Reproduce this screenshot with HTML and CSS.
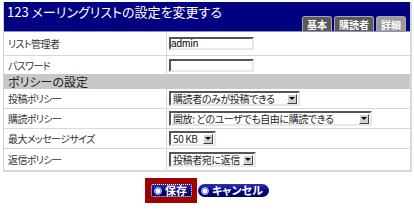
FILE: index.html
```html
<!DOCTYPE html>
<html lang="ja">
<head>
<meta charset="utf-8">
<title>メーリングリストの設定</title>
<link rel="stylesheet" href="styles.css">
</head>
<body>
<div class="panel">
  <div class="header">
    <div class="title">123 メーリングリストの設定を変更する</div>
    <div class="tabs">
      <span class="tab">基本</span>
      <span class="tab">購読者</span>
      <span class="tab active">詳細</span>
    </div>
  </div>
  <div class="row r1">
    <div class="label">リスト管理者</div>
    <div class="value"><span class="input">admin</span></div>
  </div>
  <div class="row r2">
    <div class="label">パスワード</div>
    <div class="value"><span class="input"></span></div>
  </div>
  <div class="section">ポリシーの設定</div>
  <div class="row">
    <div class="label">投稿ポリシー</div>
    <div class="value"><span class="select w1"><span class="val">購読者のみが投稿できる</span><span class="arrow"></span></span></div>
  </div>
  <div class="row">
    <div class="label">購読ポリシー</div>
    <div class="value"><span class="select w2"><span class="val">開放: どのユーザでも自由に購読できる</span><span class="arrow"></span></span></div>
  </div>
  <div class="row">
    <div class="label">最大メッセージサイズ</div>
    <div class="value"><span class="select w3"><span class="val">50 KB</span><span class="arrow"></span></span></div>
  </div>
  <div class="row last">
    <div class="label">返信ポリシー</div>
    <div class="value"><span class="select w4"><span class="val">投稿者宛に返信</span><span class="arrow"></span></span></div>
  </div>
</div>
<div class="buttons">
  <span class="focusbox"><span class="btn focused"><span class="dot"></span>保存</span></span>
  <span class="btn"><span class="dot"></span>キャンセル</span>
</div>
</body>
</html>
```
FILE: styles.css
```css
* { box-sizing: border-box; }
body {
  margin: 0;
  background: #fff;
  font-family: "Noto Sans CJK JP", "Liberation Sans", sans-serif;
  font-size: 10px;
  color: #333;
  font-feature-settings: "palt";
}
.panel {
  margin: 2px 3px 0 3px;
  width: 409px;
  border: 1px solid #d0d0d0;
  border-top: none;
  border-right: 2px solid #d8d8d8;
  border-bottom: 2px solid #d8d8d8;
}
.header {
  background: #000080;
  height: 30px;
  display: flex;
  justify-content: space-between;
  border-bottom: 1px solid #9090c0;
}
.title {
  color: #fff;
  font-size: 13px;
  line-height: 13px;
  padding: 3px 0 0 3px;
}
.tabs {
  display: flex;
  align-items: flex-end;
  gap: 2px;
  padding-right: 4px;
}
.tab {
  background: #5a5a5a;
  color: #fff;
  font-size: 10px;
  font-weight: bold;
  line-height: 13px;
  height: 15px;
  padding: 1px 4px 0;
  border: 1px solid #a8a8a8;
  border-bottom: none;
  border-radius: 3px 3px 0 0;
}
.tab.active { background: #9a9a9a; }
.row {
  display: flex;
  height: 20px;
  border-bottom: 1px solid #d8d8d8;
}
.row.r1 { height: 24px; }
.row.r2 { height: 18px; border-bottom: none; }
.row.last { border-bottom: none; height: 21px; }
.label {
  width: 163px;
  border-right: 1px solid #d8d8d8;
  padding-left: 4px;
  display: flex;
  align-items: center;
  letter-spacing: -0.6px;
}
.value {
  flex: 1;
  display: flex;
  align-items: center;
  padding-left: 2px;
}
.section {
  background: #c8c8c8;
  color: #222;
  font-size: 12px;
  line-height: 15px;
  height: 15px;
  padding-left: 4px;
}
.input {
  width: 85px;
  height: 13px;
  background: #fff;
  border: 2px solid;
  border-color: #555 #e8e8e8 #e8e8e8 #555;
  font-family: "Liberation Sans", sans-serif;
  font-size: 10px;
  line-height: 9px;
  color: #000;
  padding-left: 0;
}
.select {
  display: flex;
  align-items: center;
  height: 15px;
  background: #fff;
  border: 2px solid;
  border-color: #555 #e8e8e8 #e8e8e8 #555;
  color: #222;
  font-size: 10px;
  line-height: 11px;
}
.select .val {
  flex: 1;
  padding-left: 2px;
  white-space: nowrap;
  letter-spacing: -0.4px;
}
.select .arrow {
  width: 10px;
  height: 10px;
  margin-right: 1px;
  background: #d4d0c8;
  border: 1px solid;
  border-color: #fff #404040 #404040 #fff;
  display: flex;
  align-items: center;
  justify-content: center;
  flex: none;
}
.select .arrow::after {
  content: "";
  border-left: 3px solid transparent;
  border-right: 3px solid transparent;
  border-top: 3px solid #000;
}
.w1 { width: 131px; }
.w2 { width: 203px; }
.w3 { width: 47px; }
.w4 { width: 87px; }
.buttons {
  display: flex;
  align-items: center;
  margin: 6px 0 0 145px;
  gap: 1px;
}
.focusbox {
  background: #a00000;
  padding: 6px 5px 6px 6px;
  display: flex;
}
.btn {
  display: inline-flex;
  align-items: center;
  gap: 3px;
  height: 13px;
  padding: 0 6px 0 3px;
  background: linear-gradient(#3030b0, #000078 60%, #000060);
  border-radius: 7px;
  color: #fff;
  font-size: 11px;
  font-weight: bold;
  line-height: 13px;
}
.btn.focused {
  border-radius: 2px;
  outline: 1px dotted #fff;
  outline-offset: -1px;
  padding-right: 5px;
}
.dot {
  width: 8px;
  height: 8px;
  border-radius: 50%;
  background: radial-gradient(circle, #fff 0 2px, #8090ff 2.5px, #203090 4px);
  border: 1px solid #c0c8ff;
}
```
